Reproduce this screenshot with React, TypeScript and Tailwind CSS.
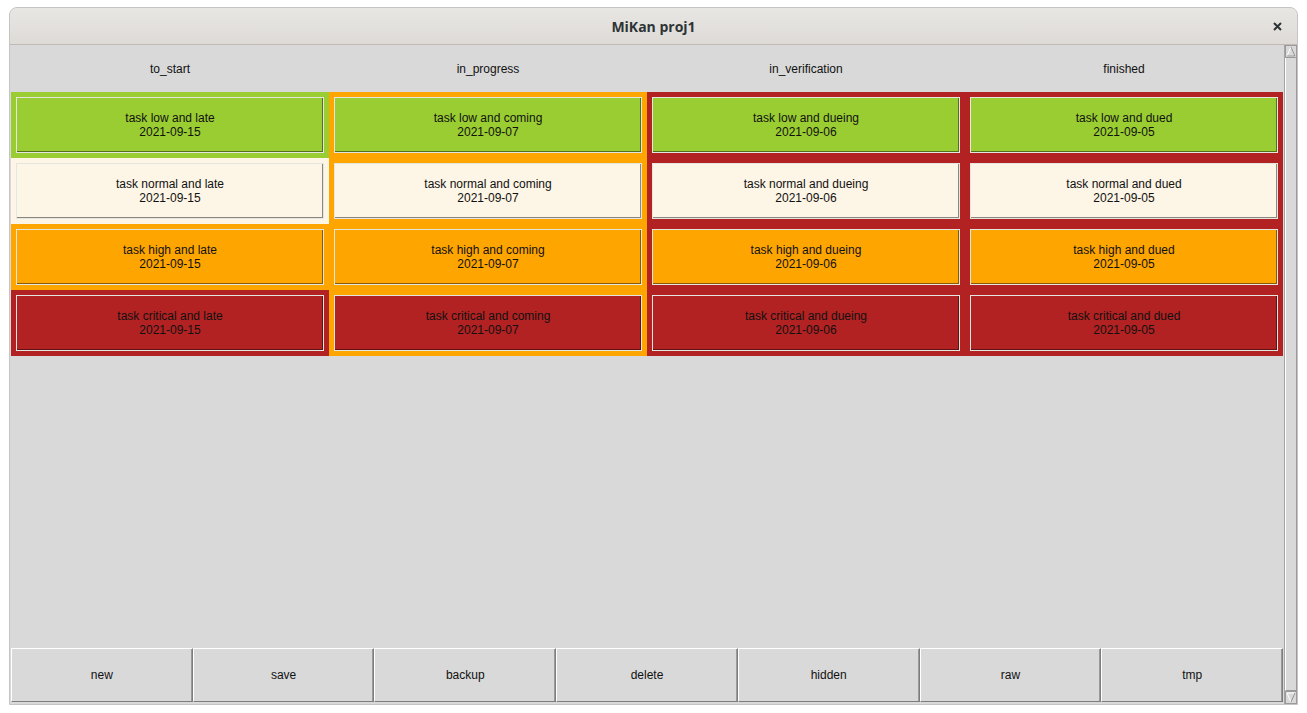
import React from 'react'

const LOW = 'bg-[#9acd32]'
const NORMAL = 'bg-[#fdf5e6]'
const HIGH = 'bg-[#ffa500]'
const CRIT = 'bg-[#b22222]'

interface Task {
  name: string
  date: string
  color: string
  cell: string
}

const columns: { title: string; tasks: Task[] }[] = [
  {
    title: 'to_start',
    tasks: [
      { name: 'task low and late', date: '2021-09-15', color: LOW, cell: LOW },
      { name: 'task normal and late', date: '2021-09-15', color: NORMAL, cell: NORMAL },
      { name: 'task high and late', date: '2021-09-15', color: HIGH, cell: HIGH },
      { name: 'task critical and late', date: '2021-09-15', color: CRIT, cell: CRIT },
    ],
  },
  {
    title: 'in_progress',
    tasks: [
      { name: 'task low and coming', date: '2021-09-07', color: LOW, cell: HIGH },
      { name: 'task normal and coming', date: '2021-09-07', color: NORMAL, cell: HIGH },
      { name: 'task high and coming', date: '2021-09-07', color: HIGH, cell: HIGH },
      { name: 'task critical and coming', date: '2021-09-07', color: CRIT, cell: HIGH },
    ],
  },
  {
    title: 'in_verification',
    tasks: [
      { name: 'task low and dueing', date: '2021-09-06', color: LOW, cell: CRIT },
      { name: 'task normal and dueing', date: '2021-09-06', color: NORMAL, cell: CRIT },
      { name: 'task high and dueing', date: '2021-09-06', color: HIGH, cell: CRIT },
      { name: 'task critical and dueing', date: '2021-09-06', color: CRIT, cell: CRIT },
    ],
  },
  {
    title: 'finished',
    tasks: [
      { name: 'task low and dued', date: '2021-09-05', color: LOW, cell: CRIT },
      { name: 'task normal and dued', date: '2021-09-05', color: NORMAL, cell: CRIT },
      { name: 'task high and dued', date: '2021-09-05', color: HIGH, cell: CRIT },
      { name: 'task critical and dued', date: '2021-09-05', color: CRIT, cell: CRIT },
    ],
  },
]

const actions = ['new', 'save', 'backup', 'delete', 'hidden', 'raw', 'tmp']

function TaskCard({ task }: { task: Task }) {
  return (
    <div className={`${task.cell} h-[66px] p-[5px]`}>
      <div
        className={`${task.color} h-full flex flex-col items-center justify-center border border-[#e6e6e0] shadow-[inset_-1px_-1px_0_rgba(0,0,0,0.45)] text-[12px] leading-[14px] text-[#111]`}
      >
        <span>{task.name}</span>
        <span>{task.date}</span>
      </div>
    </div>
  )
}

function Scrollbar() {
  return (
    <div className="w-[13px] flex flex-col border-l border-[#a3a3a3] bg-[#d9d9d9]">
      <div className="h-[13px] border border-[#9a9a9a] flex items-center justify-center">
        <svg width="10" height="11" viewBox="0 0 10 11">
          <polygon points="5,1 9,10 1,10" fill="#d9d9d9" stroke="#ffffff" strokeWidth="1" />
          <line x1="1" y1="10" x2="9" y2="10" stroke="#8a8a8a" />
          <line x1="5" y1="1" x2="9" y2="10" stroke="#8a8a8a" />
        </svg>
      </div>
      <div className="flex-1 border border-t-0 border-[#9a9a9a] border-l-white" />
      <div className="h-[13px] border border-[#9a9a9a] flex items-center justify-center">
        <svg width="10" height="11" viewBox="0 0 10 11">
          <polygon points="1,1 9,1 5,10" fill="#d9d9d9" stroke="#ffffff" strokeWidth="1" />
          <line x1="9" y1="1" x2="5" y2="10" stroke="#8a8a8a" />
        </svg>
      </div>
    </div>
  )
}

export default function App() {
  return (
    <div className="w-[1307px] h-[713px] bg-white pt-[7px] pl-[9px] font-['Liberation_Sans',Arial,sans-serif]">
      <div className="w-[1289px] h-[698px] flex flex-col border border-[#c4c4c4] rounded-t-[8px] overflow-hidden bg-[#d9d9d9]">
        <div className="h-[37px] shrink-0 flex items-center relative bg-gradient-to-b from-[#e8e6e3] to-[#dedbd7] border-b border-[#c2b9b2]">
          <span className="flex-1 text-center text-[14px] font-bold text-[#2e3436] font-['Open_Sans','Noto_Sans',sans-serif]">
            MiKan proj1
          </span>
          <svg className="absolute right-[15px] top-[14px]" width="9" height="9" viewBox="0 0 9 9">
            <path d="M1 1 L8 8 M8 1 L1 8" stroke="#2e3436" strokeWidth="2" />
          </svg>
        </div>
        <div className="flex-1 flex">
          <div className="flex-1 flex flex-col pl-[1px] pr-[1px]">
            <div className="grid grid-cols-4 h-[47px] items-center text-[12px] text-[#111]">
              {columns.map((c) => (
                <div key={c.title} className="text-center">
                  {c.title}
                </div>
              ))}
            </div>
            <div className="grid grid-cols-4">
              {columns.map((c) => (
                <div key={c.title} className="flex flex-col">
                  {c.tasks.map((t) => (
                    <TaskCard key={t.name} task={t} />
                  ))}
                </div>
              ))}
            </div>
            <div className="flex-1" />
            <div className="grid grid-cols-7 h-[54px] mb-[2px]">
              {actions.map((a) => (
                <button
                  key={a}
                  className="bg-[#d9d9d9] border border-t-white border-l-white border-b-[#7d7d7d] border-r-[#7d7d7d] shadow-[inset_-1px_0_0_#9a9a9a] text-[12px] text-[#111]"
                >
                  {a}
                </button>
              ))}
            </div>
          </div>
          <Scrollbar />
        </div>
      </div>
    </div>
  )
}
